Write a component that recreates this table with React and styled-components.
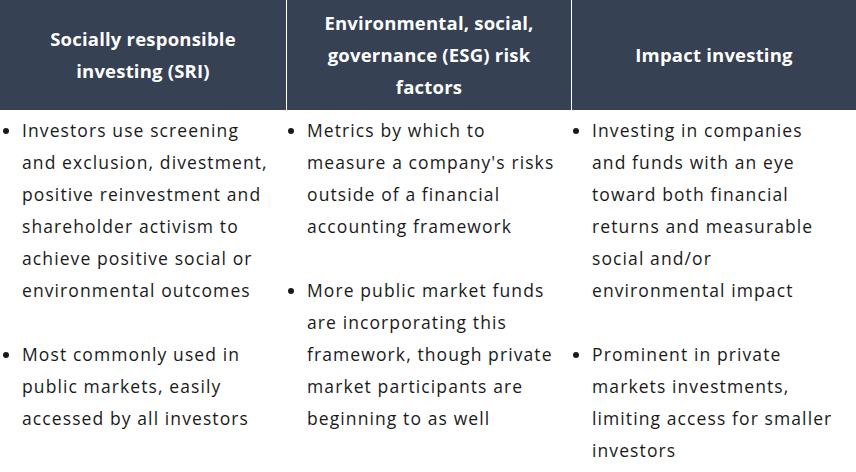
import React from "react";
import styled, { createGlobalStyle } from "styled-components";

const Global = createGlobalStyle`
  html, body { margin: 0; padding: 0; background: #ffffff; }
  body { font-family: "Open Sans", Lato, sans-serif; }
`;

const Table = styled.div`
  display: grid;
  grid-template-columns: 286px 284px 284px;
  column-gap: 1px;
  width: 856px;
`;

const HeadCell = styled.div`
  background: #364153;
  color: #ffffff;
  height: 110px;
  display: flex;
  align-items: center;
  justify-content: center;
  text-align: center;
  padding: 0 24px;
  box-sizing: border-box;
  font-weight: 700;
  font-size: 18.5px;
  line-height: 32px;
  letter-spacing: 0.2px;
`;

const BodyCell = styled.div`
  padding: 4px ${(p) => p.$right}px 0 0;
  color: #1a1a1a;
  font-size: 17.5px;
  letter-spacing: 1.1px;
  line-height: 32px;
`;

const List = styled.ul`
  margin: 0;
  padding-left: ${(p) => p.$indent}px;
  display: flex;
  flex-direction: column;
  gap: 32px;
`;

const Item = styled.li`
  &::marker { font-size: 18px; letter-spacing: 0; }
`;

const data = [
  {
    title: "Socially responsible investing (SRI)",
    indent: 22,
    right: 14,
    items: [
      "Investors use screening and exclusion, divestment, positive reinvestment and shareholder activism to achieve positive social or environmental outcomes",
      "Most commonly used in public markets, easily accessed by all investors",
    ],
  },
  {
    title: "Environmental, social, governance (ESG) risk factors",
    indent: 20,
    right: 11,
    items: [
      "Metrics by which to measure a company's risks outside of a financial accounting framework",
      "More public market funds are incorporating this framework, though private market participants are beginning to as well",
    ],
  },
  {
    title: "Impact investing",
    indent: 20,
    right: 22,
    items: [
      "Investing in companies and funds with an eye toward both financial returns and measurable social and/or environmental impact",
      "Prominent in private markets investments, limiting access for smaller investors",
    ],
  },
];

export default function App() {
  return (
    <>
      <Global />
      <Table>
        {data.map((c) => (
          <HeadCell key={c.title}>{c.title}</HeadCell>
        ))}
        {data.map((c) => (
          <BodyCell key={c.title + "b"} $right={c.right}>
            <List $indent={c.indent}>
              {c.items.map((t) => (
                <Item key={t}>{t}</Item>
              ))}
            </List>
          </BodyCell>
        ))}
      </Table>
    </>
  );
}
